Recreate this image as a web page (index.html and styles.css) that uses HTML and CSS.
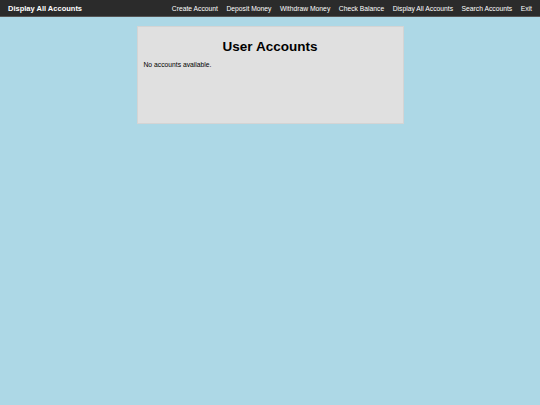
FILE: index.html
```html
<!DOCTYPE html>
<html>
<head>
<meta charset="utf-8">
<link rel="stylesheet" href="styles.css">
</head>
<body>
<nav class="navbar">
  <div class="brand">Display All Accounts</div>
  <div class="links">
    <a href="#">Create Account</a>
    <a href="#">Deposit Money</a>
    <a href="#">Withdraw Money</a>
    <a href="#">Check Balance</a>
    <a href="#">Display All Accounts</a>
    <a href="#">Search Accounts</a>
    <a href="#">Exit</a>
  </div>
</nav>
<main class="container">
  <h2 class="title">User Accounts</h2>
  <p class="empty">No accounts available.</p>
</main>
</body>
</html>
```

FILE: styles.css
```css
html, body {
  margin: 0;
  padding: 0;
}
body {
  background: #add8e6;
  font-family: "Liberation Sans", Arial, sans-serif;
  font-size: 6.75px;
  color: #000;
  height: 405px;
}
.navbar {
  display: flex;
  justify-content: space-between;
  align-items: center;
  background: #2b2b2b;
  height: 16px;
  padding: 0 8px;
  border-bottom: 1px solid #555;
}
.brand {
  color: #fff;
  font-weight: bold;
  font-size: 7.5px;
}
.links {
  display: flex;
  gap: 8.5px;
}
.links a {
  color: #fff;
  text-decoration: none;
  font-size: 6.75px;
}
.container {
  box-sizing: border-box;
  width: 267px;
  height: 98px;
  margin: 9px auto 0;
  background: #e0e0e0;
  border: 1px solid #d4d4d4;
  padding: 12px 6px 6px;
}
.title {
  margin: 0;
  text-align: center;
  font-size: 13.5px;
  font-weight: bold;
  line-height: 16px;
}
.empty {
  margin: 6px 0 0;
  line-height: 8px;
}
```
